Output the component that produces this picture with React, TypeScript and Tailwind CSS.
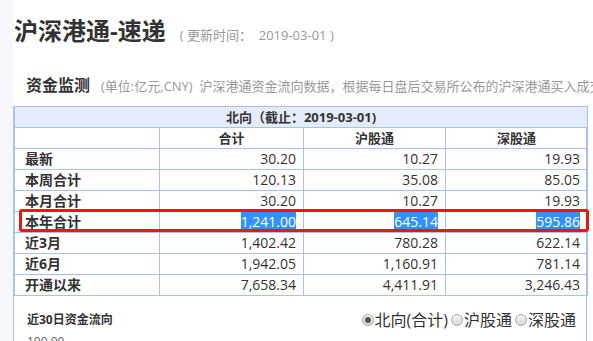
import React from "react";

const rows: [string, string, string, string][] = [
  ["最新", "30.20", "10.27", "19.93"],
  ["本周合计", "120.13", "35.08", "85.05"],
  ["本月合计", "30.20", "10.27", "19.93"],
  ["本年合计", "1,241.00", "645.14", "595.86"],
  ["近3月", "1,402.42", "780.28", "622.14"],
  ["近6月", "1,942.05", "1,160.91", "781.14"],
  ["开通以来", "7,658.34", "4,411.91", "3,246.43"],
];

const font = { fontFamily: '"Open Sans", "Noto Sans CJK SC", sans-serif' };

function Radio({ checked }: { checked?: boolean }) {
  return (
    <span className="inline-flex items-center justify-center w-[12px] h-[12px] rounded-full border border-[#a9a9a9] bg-gradient-to-b from-[#f4f4f4] to-[#d8d8d8] mr-[1px]">
      {checked && <span className="w-[6px] h-[6px] rounded-full bg-[#555]" />}
    </span>
  );
}

export default function App() {
  return (
    <div className="flex w-[593px] h-[341px] overflow-hidden bg-white text-[#333]" style={font}>
      <div className="w-[13px] shrink-0 bg-[#f6f8fb]" />
      <div className="flex-1 flex flex-col min-w-0">
        <div className="flex shrink-0 items-baseline pl-[1px] pt-[13px] h-[55px] whitespace-nowrap">
          <span className="text-[24px] font-bold leading-[36px] text-[#333]">沪深港通-速递</span>
          <span className="ml-[14px] text-[13px] text-[#999]">( 更新时间：&nbsp; 2019-03-01 )</span>
        </div>
        <div className="flex shrink-0 items-baseline pl-[13px] h-[51px] pt-[18px] whitespace-nowrap overflow-hidden">
          <span className="text-[16px] font-bold">资金监测</span>
          <span className="ml-[11px] text-[13px] text-[#999]">(单位:亿元,CNY)&nbsp;&nbsp;沪深港通资金流向数据，根据每日盘后交易所公布的沪深港通买入成交总金额</span>
        </div>
        <div className="relative shrink-0 w-[574px] border-l border-r border-[#a7c2ef] flex-1">
          <table className="w-[573px] border-collapse table-fixed text-[14px]">
            <colgroup>
              <col className="w-[145px]" />
              <col className="w-[144px]" />
              <col className="w-[142px]" />
              <col className="w-[142px]" />
            </colgroup>
            <tbody>
              <tr className="h-[21px] bg-[#e4ecf9]">
                <td colSpan={4} className="border border-[#a7c2ef] text-center font-bold text-[13px] leading-[20px] p-0">
                  北向（截止：2019-03-01)
                </td>
              </tr>
              <tr className="h-[21px]">
                <td className="border border-[#a7c2ef] p-0" />
                <td className="border border-[#a7c2ef] text-center font-bold text-[13px] leading-[20px] p-0">合计</td>
                <td className="border border-[#a7c2ef] text-center font-bold text-[13px] leading-[20px] p-0">沪股通</td>
                <td className="border border-[#a7c2ef] text-center font-bold text-[13px] leading-[20px] p-0">深股通</td>
              </tr>
              {rows.map((r, i) => {
                const hl = i === 3;
                return (
                  <tr key={r[0]} className="h-[21px]">
                    <td className="border border-[#a7c2ef] pl-[10px] font-bold leading-[20px] py-0">{r[0]}</td>
                    {r.slice(1).map((v, j) => (
                      <td key={j} className="border border-[#a7c2ef] text-right pr-[7px] leading-[20px] py-0">
                        {hl ? <span className="bg-[#3390ff] text-white">{v}</span> : v}
                      </td>
                    ))}
                  </tr>
                );
              })}
            </tbody>
          </table>
          <div className="absolute left-[5px] top-[103px] w-[570px] h-[23px] border-[3px] border-[#f01414] rounded-[3px] pointer-events-none" />
          <div className="flex items-center justify-between pl-[13px] pr-[10px] pt-[12px] whitespace-nowrap">
            <span className="text-[12px] font-bold">近30日资金流向</span>
            <div className="flex items-center text-[16px]">
              <Radio checked />
              <span>北向(合计)</span>
              <span className="ml-[3px]" />
              <Radio />
              <span>沪股通</span>
              <span className="ml-[3px]" />
              <Radio />
              <span>深股通</span>
            </div>
          </div>
          <div className="pl-[13px] pt-[1px] text-[12px] text-[#666]">100.00</div>
        </div>
      </div>
    </div>
  );
}
